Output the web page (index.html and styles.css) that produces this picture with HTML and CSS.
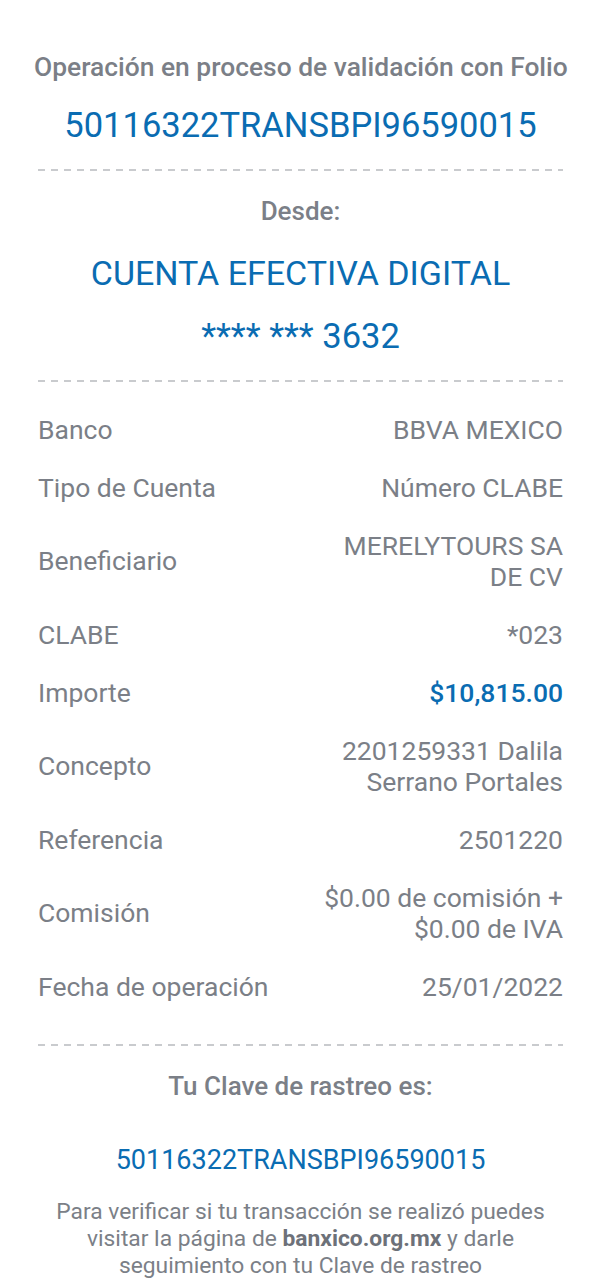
FILE: index.html
```html
<!DOCTYPE html>
<html lang="es">
<head>
    <meta charset="UTF-8">
    <meta name="viewport" content="width=device-width, initial-scale=1.0">
    <title>Comprobante de operación</title>
    <link rel="stylesheet" href="styles.css">
</head>
<body>
    <div class="comprobante">
        <h2 class="titulo">Operación en proceso de validación con Folio</h2>
        <p class="folio">50116322TRANSBPI96590015</p>

        <div class="separador"></div>

        <h3 class="subtitulo">Desde:</h3>
        <p class="cuenta">CUENTA EFECTIVA DIGITAL</p>
        <p class="cuenta-num">**** *** 3632</p>

        <div class="separador"></div>

        <div class="detalle">
            <div class="fila">
                <span class="etiqueta">Banco</span>
                <span class="valor">BBVA MEXICO</span>
            </div>
            <div class="fila">
                <span class="etiqueta">Tipo de Cuenta</span>
                <span class="valor">Número CLABE</span>
            </div>
            <div class="fila">
                <span class="etiqueta">Beneficiario</span>
                <span class="valor">MERELYTOURS SA DE CV</span>
            </div>
            <div class="fila">
                <span class="etiqueta">CLABE</span>
                <span class="valor">*023</span>
            </div>
            <div class="fila">
                <span class="etiqueta">Importe</span>
                <span class="valor importe">$10,815.00</span>
            </div>
            <div class="fila">
                <span class="etiqueta">Concepto</span>
                <span class="valor">2201259331 Dalila Serrano Portales</span>
            </div>
            <div class="fila">
                <span class="etiqueta">Referencia</span>
                <span class="valor">2501220</span>
            </div>
            <div class="fila">
                <span class="etiqueta">Comisión</span>
                <span class="valor">$0.00 de comisión + $0.00 de IVA</span>
            </div>
            <div class="fila">
                <span class="etiqueta">Fecha de operación</span>
                <span class="valor">25/01/2022</span>
            </div>
        </div>

        <div class="separador"></div>

        <h3 class="subtitulo rastreo">Tu Clave de rastreo es:</h3>
        <p class="clave">50116322TRANSBPI96590015</p>
        <p class="nota">Para verificar si tu transacción se realizó puedes visitar la página de <b>banxico.org.mx</b> y darle seguimiento con tu Clave de rastreo</p>
    </div>
</body>
</html>
```

FILE: styles.css
```css
body {
    font-family: Roboto, "Noto Sans", sans-serif;
    background-color: #fff;
    color: #7b7f87;
    margin: 0;
    padding: 0;
}

.comprobante {
    padding: 51px 38px 0 38px;
    text-align: center;
}

p, h2, h3 {
    margin: 0;
}

.titulo {
    font-size: 26.4px;
    font-weight: 500;
    line-height: 32px;
    white-space: nowrap;
    margin: 0 -4px;
}

.folio {
    color: #0a6cb2;
    font-size: 34.5px;
    line-height: 40px;
    margin-top: 22px;
}

/* linea punteada entre secciones */
.separador {
    height: 2px;
    margin-top: 24px;
    background: repeating-linear-gradient(to right, #c9cbce 0 7px, transparent 7px 13px);
}

.subtitulo {
    font-size: 26px;
    font-weight: 500;
    line-height: 32px;
    margin-top: 24px;
}

.cuenta {
    color: #0a6cb2;
    font-size: 34px;
    line-height: 40px;
    margin-top: 26px;
}

.cuenta-num {
    color: #0a6cb2;
    font-size: 34.5px;
    line-height: 40px;
    margin-top: 23px;
}

.detalle {
    margin-top: 18px;
    padding-bottom: 5px;
}

.fila {
    display: flex;
    justify-content: space-between;
    align-items: center;
    padding: 13.5px 0;
    font-size: 26.5px;
    line-height: 31px;
    text-align: left;
}

.valor {
    max-width: 245px;
    text-align: right;
}

.importe {
    color: #0a6cb2;
    font-weight: 500;
}

.clave {
    color: #0a6cb2;
    font-size: 27px;
    line-height: 32px;
    margin-top: 42px;
}

.nota {
    font-size: 22.8px;
    line-height: 27px;
    margin-top: 22px;
}

.nota b {
    color: #6d7179;
    font-weight: 700;
}
```
